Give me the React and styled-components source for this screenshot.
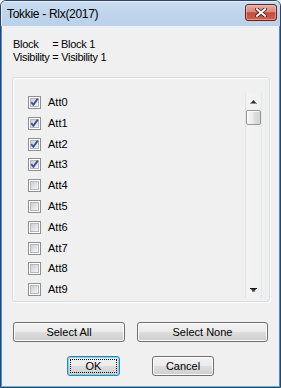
import React from "react";
import styled, { createGlobalStyle, css } from "styled-components";

const GlobalStyle = createGlobalStyle`
  html, body { margin: 0; padding: 0; background: #f0f0f0; }
  body { font-family: "Liberation Sans", Arial, sans-serif; }
  * { box-sizing: border-box; }
`;

const Window = styled.div`
  width: 281px;
  height: 388px;
  display: flex;
  flex-direction: column;
  border: 1px solid #2b4463;
  border-radius: 6px 6px 0 0;
  overflow: hidden;
  background: #b9d1ea;
`;

const TitleBar = styled.div`
  height: 25px;
  flex: none;
  display: flex;
  align-items: flex-start;
  background: linear-gradient(to bottom, #c9dcf0 0%, #bed4ec 60%, #b9d1ea 100%);
  box-shadow: inset 1px 1px 0 rgba(255, 255, 255, 0.55);
`;

const Title = styled.div`
  padding: 6px 0 0 6px;
  font-family: "Liberation Sans", Arial, sans-serif;
  font-size: 12px;
  line-height: 15px;
  letter-spacing: -0.3px;
  color: #000;
`;

const CloseButton = styled.div`
  width: 32px;
  height: 17px;
  margin: 3px 3px 0 auto;
  border: 1px solid #5c2520;
  border-radius: 3px;
  background: linear-gradient(to bottom, #e8ab9b 0%, #da8a7a 45%, #c44a39 52%, #cf624f 100%);
  box-shadow: inset 0 0 0 1px rgba(255, 220, 210, 0.45);
  display: flex;
  align-items: center;
  justify-content: center;
`;

const Client = styled.div`
  flex: 1;
  display: flex;
  flex-direction: column;
  background: #f0f0f0;
  border: 1px solid #4a8fd8;
  border-top: 0;
  border-bottom-color: #4cbeef;
  padding-top: 12px;
`;

const Info = styled.div`
  margin-left: 11px;
  font-size: 11px;
  line-height: 13px;
  letter-spacing: -0.3px;
  white-space: pre;
  color: #000;
`;

const Group = styled.div`
  margin: 13px 0 0 10px;
  width: 258px;
  height: 225px;
  flex: none;
  border: 1px solid #d5dfe5;
  border-radius: 3px;
  box-shadow: inset 1px 1px 0 #fff, 1px 1px 0 #fff;
  padding: 15px 7px 3px 11px;
  display: flex;
`;

const List = styled.div`
  flex: 1;
  display: flex;
  min-height: 0;
`;

const Items = styled.ul`
  flex: 1;
  list-style: none;
  margin: 0;
  padding: 3px 0 0 4px;
  overflow: hidden;
`;

const Row = styled.li`
  display: flex;
  align-items: center;
  gap: 7px;
  height: 13px;
  margin-bottom: 7.8px;
`;

const Label = styled.span`
  font-size: 11px;
  line-height: 13px;
  color: #000;
`;

const Scrollbar = styled.div`
  width: 17px;
  flex: none;
  display: flex;
  flex-direction: column;
  align-items: center;
  background: linear-gradient(
    to right,
    #e3e3e3 0,
    #e3e3e3 1px,
    #f4f4f4 1px,
    #f0f0f0 calc(100% - 1px),
    #e6e6e6 calc(100% - 1px)
  );
`;

const ArrowBtn = styled.div`
  height: 17px;
  width: 17px;
  flex: none;
  display: flex;
  align-items: center;
  justify-content: center;
`;

const Thumb = styled.div`
  width: 15px;
  height: 15px;
  flex: none;
  border: 1px solid #979797;
  border-radius: 2px;
  background: linear-gradient(to right, #f6f6f6 0%, #ececec 45%, #dedede 55%, #d3d3d3 100%);
  box-shadow: inset 1px 1px 0 #fcfcfc;
`;

const Track = styled.div`
  flex: 1;
`;

const ButtonRow = styled.div`
  display: flex;
  gap: ${(p) => p.$gap}px;
  margin-top: ${(p) => p.$top}px;
  padding-left: ${(p) => (p.$center ? 0 : 11)}px;
  justify-content: ${(p) => (p.$center ? "center" : "flex-start")};
`;

const Button = styled.button`
  position: relative;
  width: ${(p) => p.$w}px;
  height: 20px;
  padding: 0;
  border: 1px solid #707070;
  border-radius: 3px;
  background: linear-gradient(to bottom, #f2f2f2 0%, #ebebeb 50%, #dddddd 50%, #cfcfcf 100%);
  box-shadow: inset 0 0 0 1px #fbfbfb;
  font-family: "Liberation Sans", Arial, sans-serif;
  font-size: 11px;
  line-height: 13px;
  color: #000;
  ${(p) =>
    p.$default &&
    css`
      border-color: #3c7fb1;
      box-shadow: inset 0 0 0 1px #6fd6fb;
      &::after {
        content: "";
        position: absolute;
        inset: 2px;
        border: 1px dotted #000;
      }
    `}
`;

const CheckBox = ({ checked }) => (
  <svg width="13" height="13" viewBox="0 0 13 13">
    <defs>
      <linearGradient id="cbfill" x1="0" y1="0" x2="1" y2="1">
        <stop offset="0" stopColor="#c9ccd1" />
        <stop offset="1" stopColor="#f7f7f7" />
      </linearGradient>
    </defs>
    <rect x="0.5" y="0.5" width="12" height="12" fill="#fff" stroke="#8e8f8f" />
    <rect x="2.5" y="2.5" width="8" height="8" fill="url(#cbfill)" stroke="#b4b8bd" />
    {checked && (
      <path
        d="M3.2 6.2 L5.4 8.8 L9.8 2.6"
        fill="none"
        stroke="#3d5595"
        strokeWidth="1.9"
        strokeLinejoin="miter"
      />
    )}
  </svg>
);

const UpArrow = () => (
  <svg width="7" height="4" viewBox="0 0 7 4">
    <polygon points="3.5,0 7,4 0,4" fill="#2e2e2e" />
    <rect x="0" y="3" width="7" height="1" fill="#8a8a8a" />
  </svg>
);

const DownArrow = () => (
  <svg width="7" height="4" viewBox="0 0 7 4">
    <polygon points="0,0 7,0 3.5,4" fill="#2e2e2e" />
    <rect x="0" y="0" width="7" height="1" fill="#1a1a1a" />
    <rect x="2" y="3" width="3" height="1" fill="#8a8a8a" />
  </svg>
);

const CloseGlyph = () => (
  <svg width="12" height="9" viewBox="0 0 12 9">
    <path d="M2 1.2 L10 7.8 M10 1.2 L2 7.8" stroke="#4a1c18" strokeWidth="3.6" strokeLinecap="square" />
    <path d="M2 1.2 L10 7.8 M10 1.2 L2 7.8" stroke="#fff" strokeWidth="2" strokeLinecap="square" />
  </svg>
);

const items = Array.from({ length: 10 }, (_, i) => ({ label: `Att${i}`, checked: i < 4 }));

export default function App() {
  return (
    <>
      <GlobalStyle />
      <Window>
        <TitleBar>
          <Title>Tokkie - Rlx(2017)</Title>
          <CloseButton>
            <CloseGlyph />
          </CloseButton>
        </TitleBar>
        <Client>
          <Info>
            {"Block     = Block 1\nVisibility = Visibility 1"}
          </Info>
          <Group>
            <List>
              <Items>
                {items.map((it) => (
                  <Row key={it.label}>
                    <CheckBox checked={it.checked} />
                    <Label>{it.label}</Label>
                  </Row>
                ))}
              </Items>
              <Scrollbar>
                <ArrowBtn>
                  <UpArrow />
                </ArrowBtn>
                <Thumb />
                <Track />
                <ArrowBtn>
                  <DownArrow />
                </ArrowBtn>
              </Scrollbar>
            </List>
          </Group>
          <ButtonRow $gap={12} $top={20}>
            <Button $w={112}>Select All</Button>
            <Button $w={131}>Select None</Button>
          </ButtonRow>
          <ButtonRow $gap={32} $top={14} $center>
            <Button $w={53} $default>OK</Button>
            <Button $w={62}>Cancel</Button>
          </ButtonRow>
        </Client>
      </Window>
    </>
  );
}
